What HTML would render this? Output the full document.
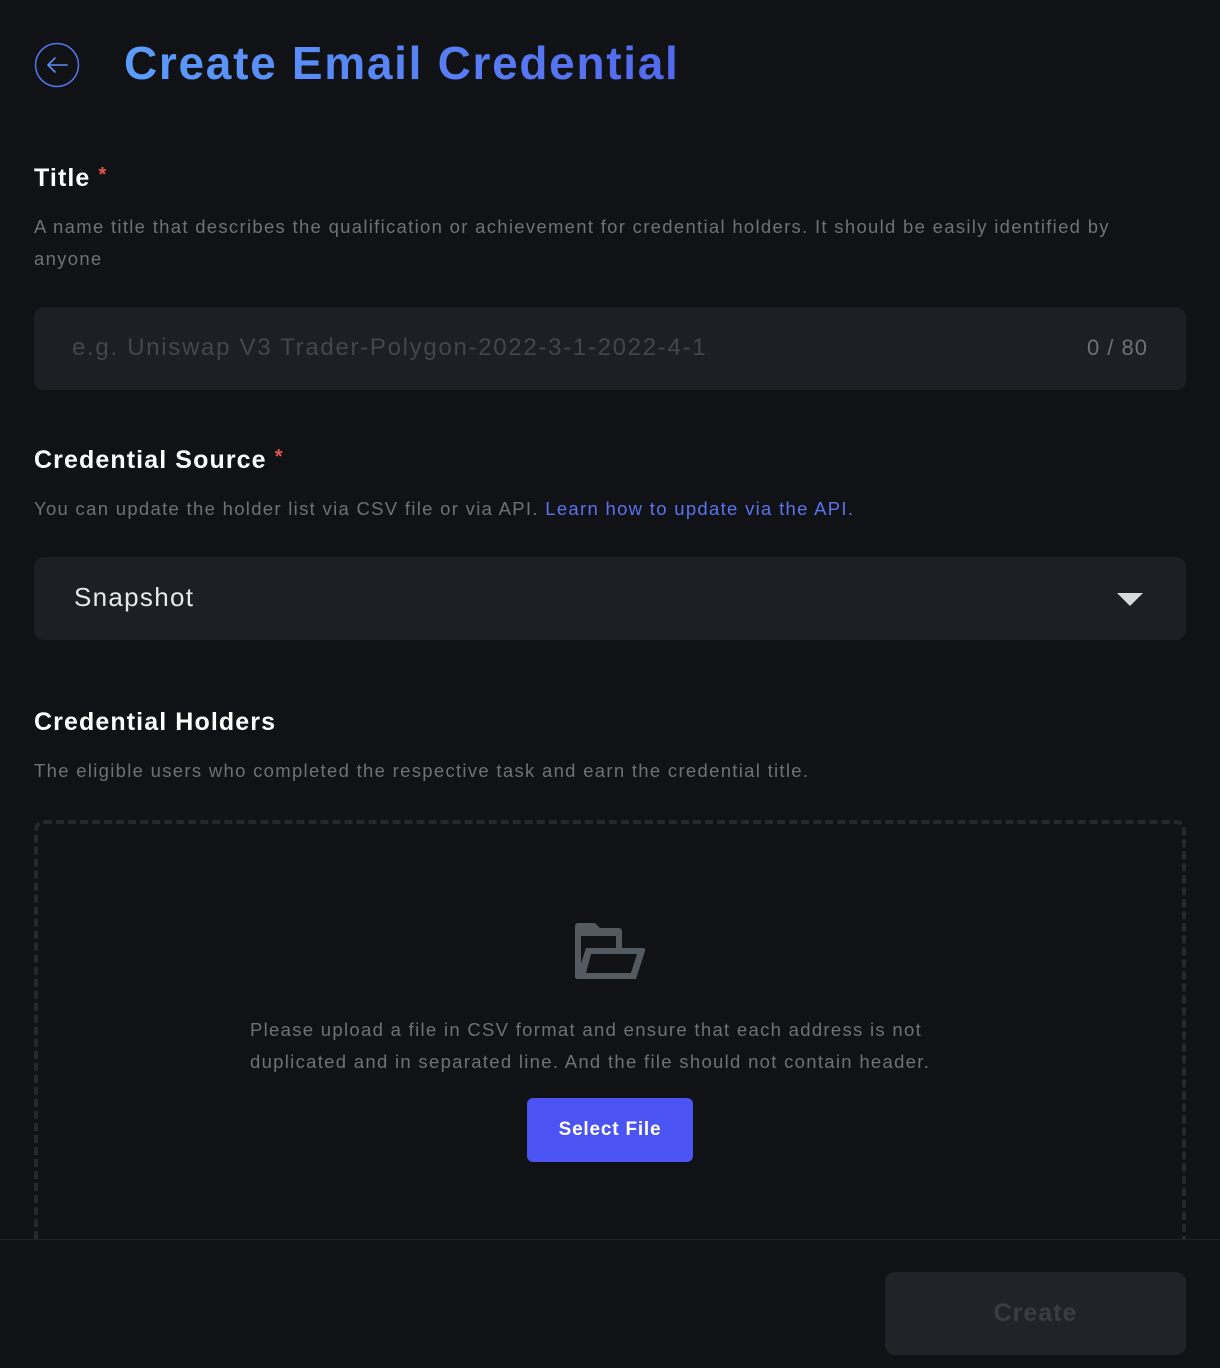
<!DOCTYPE html>
<html><head><style>
*{margin:0;padding:0;box-sizing:border-box}
body{width:1220px;height:1368px;background:#111216;font-family:"Liberation Sans",sans-serif;position:relative;overflow:hidden;color:#fff}
.abs{position:absolute}
h1{position:absolute;left:124px;top:36px;font-size:46px;font-weight:bold;background:linear-gradient(90deg,#5b9dfb,#5468ee);-webkit-background-clip:text;color:transparent;letter-spacing:1.7px;white-space:nowrap}
.lbl{position:absolute;left:34px;font-size:25px;font-weight:bold;color:#fff;letter-spacing:1.1px}
.lbl span{color:#e5554f;font-size:20px;vertical-align:top}
.desc{position:absolute;left:34px;font-size:18.5px;color:#6f7178;line-height:32px;width:1130px;letter-spacing:1.3px}
.inp{position:absolute;left:34px;width:1152px;height:83px;background:#1e1f24;border-radius:10px}
</style></head><body>
<svg class="abs" style="left:34px;top:42px" width="46" height="46" viewBox="0 0 46 46"><circle cx="23" cy="23" r="21.5" fill="none" stroke="#5577ee" stroke-width="1.5"/><path d="M33 23H14M21 16l-7 7 7 7" fill="none" stroke="#5a8cf8" stroke-width="1.6" stroke-linecap="round" stroke-linejoin="round"/></svg>
<h1>Create Email Credential</h1>
<div class="lbl" style="top:164px">Title <span>*</span></div>
<div class="desc" style="top:211px">A name title that describes the qualification or achievement for credential holders. It should be easily identified by anyone</div>
<div class="inp" style="top:307px"><div class="abs" style="left:38px;top:27px;font-size:24px;color:#44464c;letter-spacing:1.7px;white-space:nowrap">e.g. Uniswap V3 Trader-Polygon-2022-3-1-2022-4-1</div><div class="abs" style="right:38px;top:28px;font-size:22px;color:#6f7178;letter-spacing:1px">0 / 80</div></div>
<div class="lbl" style="top:446px">Credential Source <span>*</span></div>
<div class="desc" style="top:493px">You can update the holder list via CSV file or via API. <span style="color:#5a73f0">Learn how to update via the API.</span></div>
<div class="inp" style="top:557px"><div class="abs" style="left:40px;top:25px;font-size:26px;color:#e8e8ea;letter-spacing:1.3px">Snapshot</div><svg class="abs" style="left:1083px;top:36px" width="26" height="14"><path d="M0 0h26L13 13z" fill="#d8d9dc"/></svg></div>
<div class="lbl" style="top:708px">Credential Holders</div>
<div class="desc" style="top:755px">The eligible users who completed the respective task and earn the credential title.</div>
<div class="abs" style="left:34px;top:820px;width:1152px;height:480px;border:4px dashed #26282d;border-radius:10px"></div>
<svg class="abs" style="left:574px;top:922px" width="72" height="60" viewBox="0 0 72 60"><path d="M1 56V4a3 3 0 013-3h17l5 5h19a3 3 0 013 3v18H14L4 56z" fill="#555960"/><path d="M7 14v30l5-17h30V14z" fill="#111216"/><path d="M12 26h57a2 2 0 012 3l-9 28H2z" fill="#555960"/><path d="M17 32h46l-6 19H12z" fill="#111216"/></svg>
<div class="abs" style="left:250px;top:1014px;width:720px;font-size:18.5px;line-height:32px;color:#6f7178;letter-spacing:1.3px">Please upload a file in CSV format and ensure that each address is not duplicated and in separated line. And the file should not contain header.</div>
<div class="abs" style="left:527px;top:1098px;width:166px;height:64px;background:#4b53f2;border-radius:6px;font-size:19px;font-weight:bold;color:#fff;text-align:center;line-height:64px;letter-spacing:0.8px">Select File</div>
<div class="abs" style="left:0;top:1239px;width:1220px;height:129px;background:#111216;border-top:1px solid #202226"></div>
<div class="abs" style="left:885px;top:1272px;width:301px;height:83px;background:#212328;border-radius:10px;font-size:25px;font-weight:bold;color:#3b3d43;text-align:center;line-height:83px;letter-spacing:1px">Create</div>
</body></html>
